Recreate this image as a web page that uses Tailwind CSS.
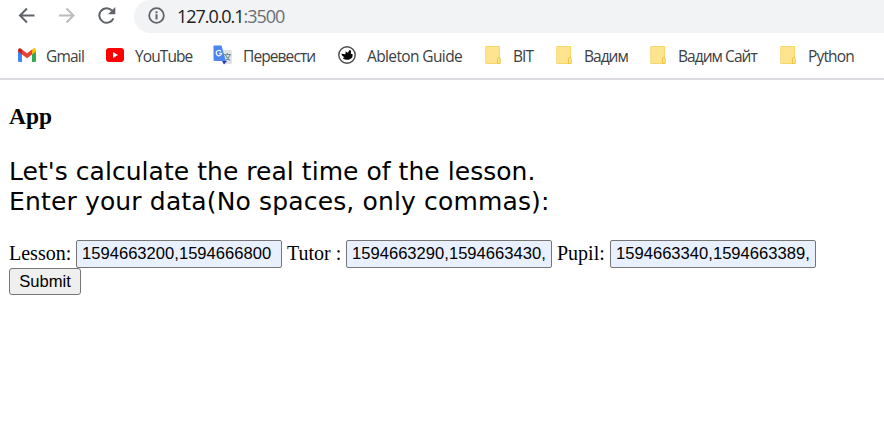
<!DOCTYPE html>
<html lang="en">
<head>
<meta charset="utf-8">
<title>App</title>
<script src="https://cdn.jsdelivr.net/npm/@tailwindcss/browser@4"></script>
</head>
<body class="h-[432px] w-[884px] overflow-hidden bg-white text-black">
<svg class="hidden">
  <symbol id="folder" viewBox="0 0 18 20"><path d="M.8 1.500h13.700v17H.8z" fill="#ffe48f" stroke="#f7d66b"/><path d="M12.500 18.500v-5.200c0-1 2.700-1 2.700 0v5.200z" fill="#ffe48f" stroke="#edc644"/></symbol>
</svg>
<header class="flex h-20 flex-col border-b-2 border-[#dadce0] font-['Open_Sans','Noto_Sans',sans-serif]">
  <div class="flex h-[33px] items-start pl-[18px]">
    <svg class="mt-[7px] mr-6 h-[17px] w-[17px] shrink-0" viewBox="0 0 17 17" fill="none" stroke="#5f6368" stroke-width="2"><path d="M16.500 8.500H2M9 1.500l-7 7 7 7"/></svg>
    <svg class="mt-[7px] mr-[22px] h-[17px] w-[17px] shrink-0" viewBox="0 0 17 17" fill="none" stroke="#babcbe" stroke-width="2"><path d="M0 8.500H14.500M7.500 1.500l7 7-7 7"/></svg>
    <svg class="mt-[7px] mr-[17px] h-[18px] w-[19px] shrink-0" viewBox="0 0 19 18"><path d="M15.400 11.300A7.300 7.300 0 1 1 14 3.500" fill="none" stroke="#5f6368" stroke-width="2"/><path d="M17.300 0v7.300H10z" fill="#5f6368"/></svg>
    <div class="flex h-[33px] flex-1 items-center rounded-l-full bg-[#f1f3f4] pb-[2px] pl-[14px]">
      <svg class="mr-3 h-[17px] w-[17px] shrink-0" viewBox="0 0 17 17"><circle cx="8.500" cy="8.500" r="7.300" fill="none" stroke="#5f6368" stroke-width="1.800"/><path d="M8.500 7.300v5.200M8.500 4.200v2" stroke="#5f6368" stroke-width="2"/></svg>
      <span class="text-[18px] leading-5 tracking-[-1.05px] whitespace-nowrap text-[#202124]">127.0.0.1<span class="text-[#6b6f74]">:3500</span></span>
    </div>
  </div>
  <nav class="flex h-[45px] items-center pb-[1px] pl-[18px] text-[15.500px] leading-5 whitespace-nowrap text-[#3c4043] [&_span]:pt-px">
    <div class="flex w-[88px] shrink-0 items-center">
      <svg class="mr-[10px] h-[14px] w-[18px] shrink-0" viewBox="0 0 18 14"><path d="M0 3v9.700Q0 14 1.300 14H4V6z" fill="#4285f4"/><path d="M18 3v9.700q0 1.300-1.300 1.300H14V6z" fill="#34a853"/><path d="M4 1.400 9 5.200l5-3.800v5L9 10.200 4 6.400z" fill="#ea4335"/><path d="M0 2.300C0 .3 2.100-.5 4 1.400v5L0 3.600z" fill="#c5221f"/><path d="M18 2.300c0-2-2.100-2.800-4-.9v5l4-2.800z" fill="#fbbc04"/></svg>
      <span class="tracking-[-0.8px]">Gmail</span>
    </div>
    <div class="flex w-[107px] shrink-0 items-center">
      <svg class="mr-[11px] h-[14px] w-[18px] shrink-0" viewBox="0 0 18 14"><rect width="18" height="14" rx="3" fill="#f00"/><path d="m7 4 5 3-5 3z" fill="#fff"/></svg>
      <span class="tracking-[-0.9px]">YouTube</span>
    </div>
    <div class="flex w-[125px] shrink-0 items-center">
      <svg class="mr-[11px] h-5 w-[19px] shrink-0" viewBox="0 0 19 20"><path d="M8 5h10q1 0 1 1v12q0 1-1 1h-7z" fill="#e1e3e5"/><path d="M11 9.500h7M14.300 8v1.500M17 9.800c-.8 2.700-2.700 4.700-4.500 5.700M12.500 10c1 2.500 2.500 4 4.600 5.500" stroke="#78909c" stroke-width="1.200" fill="none"/><path d="M9 16h5l-3 3.500z" fill="#3038b8"/><path d="M1.300.500h7.200l4.300 15.500H2q-1.500 0-1.500-1.500V1.500q0-1 .8-1z" fill="#4c86ee"/><path d="M8 6.300A2.700 2.700 0 1 0 8.600 8.300H6" fill="none" stroke="#eef4ff" stroke-width="1.300"/></svg>
      <span class="tracking-[-0.9px]">Перевести</span>
    </div>
    <div class="flex w-[147px] shrink-0 items-center">
      <svg class="mr-[11px] h-[18px] w-[18px] shrink-0" viewBox="0 0 18 18"><circle cx="9" cy="9" r="8.200" fill="#fff" stroke="#484848" stroke-width="1.400"/><path d="M3.200 7.800 7.500 8.300V5.500l2.300 1.300L11.500 4l1.600.8-.3 2.700 1.900 1q0 4.500-4.200 5.200-4.500.7-5.800-1.600l1.900-.8Q4 10.500 3.200 7.800z" fill="#050505"/></svg>
      <span class="tracking-[-0.62px]">Ableton Guide</span>
    </div>
    <div class="flex w-[71px] shrink-0 items-center"><svg class="mr-[10px] h-5 w-[18px] shrink-0"><use href="#folder"/></svg><span class="tracking-[-0.9px]">BIT</span></div>
    <div class="flex w-[94px] shrink-0 items-center"><svg class="mr-[10px] h-5 w-[18px] shrink-0"><use href="#folder"/></svg><span class="tracking-[-1px]">Вадим</span></div>
    <div class="flex w-[130px] shrink-0 items-center"><svg class="mr-[10px] h-5 w-[18px] shrink-0"><use href="#folder"/></svg><span class="tracking-[-0.95px]">Вадим Сайт</span></div>
    <div class="flex shrink-0 items-center"><svg class="mr-[10px] h-5 w-[18px] shrink-0"><use href="#folder"/></svg><span class="tracking-[-0.85px]">Python</span></div>
  </nav>
</header>
<main class="pt-[23px] pl-[9px] font-['Liberation_Serif',serif]">
  <h3 class="text-[23.400px] leading-[26px] font-bold">App</h3>
  <p class="mt-7 font-['DejaVu_Sans',sans-serif] text-[25px] leading-[30px] whitespace-nowrap"><span class="tracking-[0.04px]">Let's calculate the real time of the lesson.</span><br><span class="tracking-[0.15px]">Enter your data(No spaces, only commas):</span></p>
  <form class="mt-[23px] text-[20px] leading-[23px]">
    <div class="flex h-7 items-center whitespace-nowrap">
      <label class="w-[67px] shrink-0 pb-[2px]">Lesson:</label>
      <input class="h-7 w-[206px] shrink-0 rounded-[2px] border border-[#767676] bg-[#e8f0fe] px-[5px] font-['Liberation_Sans',sans-serif] text-[16.600px]" value="1594663200,1594666800">
      <label class="ml-[5px] w-[59px] shrink-0 pb-[2px]">Tutor :</label>
      <input class="h-7 w-[206px] shrink-0 rounded-[2px] border border-[#767676] bg-[#e8f0fe] px-[5px] font-['Liberation_Sans',sans-serif] text-[16.600px]" value="1594663290,1594663430,">
      <label class="ml-[5px] w-[53px] shrink-0 pb-[2px]">Pupil:</label>
      <input class="h-7 w-[206px] shrink-0 rounded-[2px] border border-[#767676] bg-[#e8f0fe] px-[5px] font-['Liberation_Sans',sans-serif] text-[16.600px]" value="1594663340,1594663389,">
    </div>
    <button type="button" class="block h-[27px] w-[72px] rounded-[3px] border border-[#767676] bg-[#efefef] font-['Liberation_Sans',sans-serif] text-[16.600px] leading-5">Submit</button>
  </form>
</main>
</body>
</html>
